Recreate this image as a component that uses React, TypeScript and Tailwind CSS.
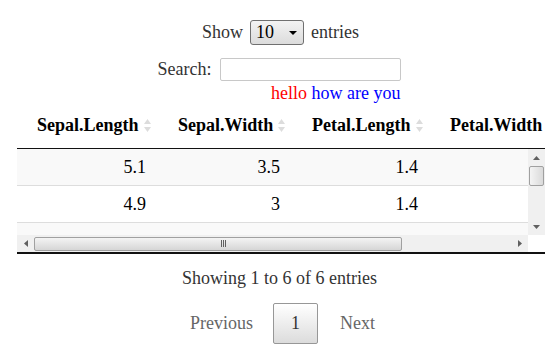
import React from 'react';

type Col = { name: string; width: string };

const columns: Col[] = [
  { name: 'Sepal.Length', width: 'w-[141px]' },
  { name: 'Sepal.Width', width: 'w-[134px]' },
  { name: 'Petal.Length', width: 'w-[138px]' },
  { name: 'Petal.Width', width: 'w-[130px]' },
];

// 4th column values sit under the vertical scrollbar, third row is below the fold
const rows = [
  ['5.1', '3.5', '1.4', ''],
  ['4.9', '3', '1.4', ''],
  ['', '', '', ''],
];

const SortIcon = () => (
  <svg width="9" height="15" viewBox="0 0 9 15" className="shrink-0">
    <path d="M4.5 1 L8 6 L1 6 Z" fill="#dcdcdc" />
    <path d="M4.5 14 L8 9 L1 9 Z" fill="#dcdcdc" />
  </svg>
);

const VScrollbar = () => (
  <div className="w-[17px] h-[86px] bg-[#f0f0f0] flex flex-col items-center">
    <div className="h-[17px] w-full flex items-center justify-center">
      <svg width="7" height="4" viewBox="0 0 7 4">
        <path d="M3.5 0 L7 4 L0 4 Z" fill="#606060" />
      </svg>
    </div>
    <div className="w-[15px] h-[20px] border border-[#a0a0a0] rounded-[2px] bg-gradient-to-r from-[#f4f4f4] to-[#dadada]" />
    <div className="flex-1" />
    <div className="h-[17px] w-full flex items-center justify-center">
      <svg width="7" height="4" viewBox="0 0 7 4">
        <path d="M0 0 L7 0 L3.5 4 Z" fill="#606060" />
      </svg>
    </div>
  </div>
);

const HScrollbar = () => (
  <div className="flex h-[17px]">
    <div className="w-[511px] h-full bg-[#f0f0f0] flex items-center">
      <div className="w-[17px] h-full flex items-center justify-center">
        <svg width="4" height="7" viewBox="0 0 4 7">
          <path d="M4 0 L4 7 L0 3.5 Z" fill="#606060" />
        </svg>
      </div>
      <div className="w-[368px] h-[14px] border border-[#a0a0a0] rounded-[2px] bg-gradient-to-b from-[#f4f4f4] to-[#d6d6d6] flex items-center justify-center">
        <div className="flex gap-[1px] ml-[10px]">
          <div className="w-[1px] h-[7px] bg-[#606060]" />
          <div className="w-[1px] h-[7px] bg-[#606060]" />
          <div className="w-[1px] h-[7px] bg-[#606060]" />
        </div>
      </div>
      <div className="flex-1" />
      <div className="w-[17px] h-full flex items-center justify-center">
        <svg width="4" height="7" viewBox="0 0 4 7">
          <path d="M0 0 L4 3.5 L0 7 Z" fill="#606060" />
        </svg>
      </div>
    </div>
    <div className="w-[17px] h-full bg-white" />
  </div>
);

export default function App() {
  return (
    <div className="w-[559px] h-[357px] bg-white text-[18px] text-[#333] font-['Liberation_Serif','DejaVu_Serif',serif]">
      <div className="flex flex-col items-center pt-[20px]">
        <div className="flex items-center h-[25px] text-[#333] ml-[2px]">
          <span>Show</span>
          <div className="mx-[7px] w-[54px] h-[25px] border border-[#707070] rounded-[3px] bg-gradient-to-b from-[#f3f3f3] to-[#dcdcdc] flex items-center pl-[5px] pr-[6px] text-black">
            <span className="flex-1">10</span>
            <svg width="8" height="4" viewBox="0 0 8 4">
              <path d="M0 0 L8 0 L4 4 Z" fill="#000" />
            </svg>
          </div>
          <span>entries</span>
        </div>
        <div className="flex items-center mt-[13px] h-[22px]">
          <span>Search:</span>
          <div className="ml-[9px] w-[181px] h-[23px] border border-[#c8c8c8] rounded-[2px] bg-white" />
        </div>
        <div className="w-[242px] mt-[2px] text-right leading-[22px]">
          <span className="text-[#ff0000]">hello</span> <span className="text-[#0000ff]">how are you</span>
        </div>
      </div>

      <div className="ml-[17px] w-[528px] mt-[2px]">
        <div className="h-[43px] overflow-hidden border-b border-[#111] flex pb-[3px]">
          {columns.map((c, j) => (
            <div
              key={c.name}
              className={`${c.width} shrink-0 flex items-center justify-between pl-[20px] pr-[6px] font-bold text-black`}
            >
              <span className="whitespace-nowrap">{c.name}</span>
              {j < 3 && <SortIcon />}
            </div>
          ))}
        </div>
        <div className="flex">
          <div className="w-[511px] h-[86px] overflow-hidden">
            {rows.map((r, i) => (
              <div
                key={i}
                className={`flex h-[37px] border-b border-[#ddd] ${i % 2 === 0 ? 'bg-[#f9f9f9]' : 'bg-white'}`}
              >
                {r.map((v, j) => (
                  <div
                    key={j}
                    className={`${columns[j].width} shrink-0 flex items-center justify-end pr-[12px] text-black`}
                  >
                    {v}
                  </div>
                ))}
              </div>
            ))}
          </div>
          <VScrollbar />
        </div>
        <HScrollbar />
        <div className="h-[2px] bg-[#111]" />
      </div>

      <div className="flex flex-col items-center">
        <div className="mt-[13px] leading-[22px]">Showing 1 to 6 of 6 entries</div>
        <div className="flex items-center mt-[14px] ml-[8px]">
          <span className="text-[#666] px-[10px]">Previous</span>
          <div className="w-[45px] h-[41px] border border-[#979797] rounded-[2px] bg-gradient-to-b from-white to-[#dcdcdc] flex items-center justify-center text-[#333] mx-[10px]">
            1
          </div>
          <span className="text-[#666] px-[12px]">Next</span>
        </div>
      </div>
    </div>
  );
}
